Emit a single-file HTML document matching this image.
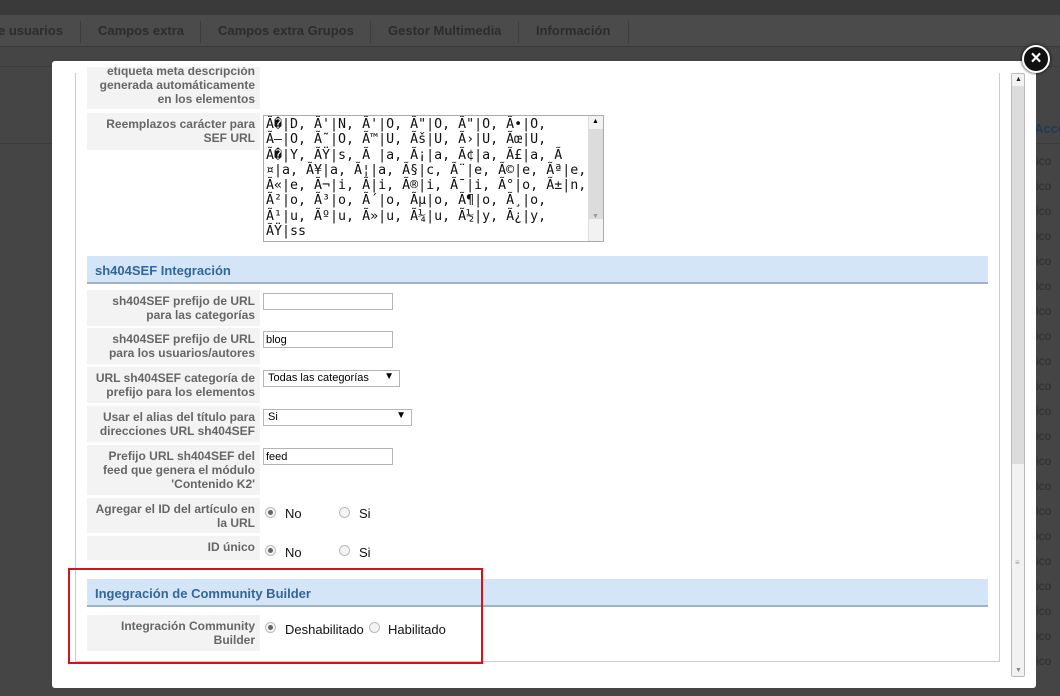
<!DOCTYPE html>
<html><head><meta charset="utf-8"><style>
*{margin:0;padding:0;box-sizing:border-box}
html,body{width:1060px;height:696px;overflow:hidden;background:#454545}
body{position:relative;font-family:"Liberation Sans",sans-serif}
.a{position:absolute}
.s{position:absolute;width:265px;height:24px;background:#454545}
.n{position:absolute;top:15px;width:265px;height:32px;background:#4b4b4b}
.top{left:0;top:0;width:1060px;height:15px;background:#3a3a3a}
.nv{left:0;top:15px;width:1060px;height:32px;border-bottom:1px solid #3a3a3a}
.nv span{position:absolute;top:8px;font-size:13px;font-weight:bold;color:#2c2c2c}
.nv i{position:absolute;top:6px;width:1px;height:22px;background:#3d3d3d}
.bgrow{left:0;width:1060px;height:1px;background:#3c3c3c}
.ico{left:1036px;font-size:12px;color:#2e2e2e}
.modal{left:52px;top:61px;width:984px;height:627px;background:#fff;border-radius:3px}
.inner{left:75px;top:73px;width:925px;height:589px;border-left:1px solid #ccc;border-right:1px solid #ccc;border-bottom:1px solid #ccc}
.lab{left:87px;width:173px;background:#f3f3f3;font-size:12px;font-weight:bold;color:#666;text-align:right;padding:4px 5px 0 0;line-height:14px}
.hdr{left:87px;width:901px;height:28px;background:#d4e5f7;border-bottom:2px solid #9fb3c8;font-size:13px;font-weight:bold;color:#336699;padding:7px 0 0 8px}
.inp{height:17px;border:1px solid #b5b5b5;background:#fff;font-size:11px;padding:2px 2px;color:#000}
.sel{height:17px;border:1px solid #b5b5b5;background:#fff;font-size:11px;padding:1px 4px;color:#000}
.sel b{position:absolute;right:5px;top:0;font-size:10px}
.rad{width:11px;height:11px;border-radius:50%;border:1px solid #bbb;background:#f4f4f4}
.rad.on::after{content:"";position:absolute;left:2px;top:2px;width:5px;height:5px;border-radius:50%;background:#666}
.rt{font-size:13px;color:#111}
.ta{left:263px;top:115px;width:341px;height:127px;border:1px solid #aaa;background:#fff;overflow:hidden}
.ta pre{position:absolute;left:2px;top:1px;font-family:"DejaVu Sans Mono","Liberation Mono",monospace;font-size:13.3px;line-height:15.3px;color:#111}
</style></head><body>
<div class="s" style="left:0;top:47px"></div><div class="s" style="left:265px;top:47px"></div><div class="s" style="left:530px;top:47px"></div><div class="s" style="left:795px;top:47px"></div>
<div class="s" style="left:0;top:71px"></div><div class="s" style="left:795px;top:71px"></div>
<div class="s" style="left:0;top:95px"></div><div class="s" style="left:795px;top:95px"></div>
<div class="s" style="left:0;top:119px"></div><div class="s" style="left:795px;top:119px"></div>
<div class="s" style="left:0;top:143px"></div><div class="s" style="left:795px;top:143px"></div>
<div class="s" style="left:0;top:167px"></div><div class="s" style="left:795px;top:167px"></div>
<div class="s" style="left:0;top:191px"></div><div class="s" style="left:795px;top:191px"></div>
<div class="s" style="left:0;top:215px"></div><div class="s" style="left:795px;top:215px"></div>
<div class="s" style="left:0;top:239px"></div><div class="s" style="left:795px;top:239px"></div>
<div class="s" style="left:0;top:263px"></div><div class="s" style="left:795px;top:263px"></div>
<div class="s" style="left:0;top:287px"></div><div class="s" style="left:795px;top:287px"></div>
<div class="s" style="left:0;top:311px"></div><div class="s" style="left:795px;top:311px"></div>
<div class="s" style="left:0;top:335px"></div><div class="s" style="left:795px;top:335px"></div>
<div class="s" style="left:0;top:359px"></div><div class="s" style="left:795px;top:359px"></div>
<div class="s" style="left:0;top:383px"></div><div class="s" style="left:795px;top:383px"></div>
<div class="s" style="left:0;top:407px"></div><div class="s" style="left:795px;top:407px"></div>
<div class="s" style="left:0;top:431px"></div><div class="s" style="left:795px;top:431px"></div>
<div class="s" style="left:0;top:455px"></div><div class="s" style="left:795px;top:455px"></div>
<div class="s" style="left:0;top:479px"></div><div class="s" style="left:795px;top:479px"></div>
<div class="s" style="left:0;top:503px"></div><div class="s" style="left:795px;top:503px"></div>
<div class="s" style="left:0;top:527px"></div><div class="s" style="left:795px;top:527px"></div>
<div class="s" style="left:0;top:551px"></div><div class="s" style="left:795px;top:551px"></div>
<div class="s" style="left:0;top:575px"></div><div class="s" style="left:795px;top:575px"></div>
<div class="s" style="left:0;top:599px"></div><div class="s" style="left:795px;top:599px"></div>
<div class="s" style="left:0;top:623px"></div><div class="s" style="left:795px;top:623px"></div>
<div class="s" style="left:0;top:647px"></div><div class="s" style="left:795px;top:647px"></div>
<div class="s" style="left:0;top:671px;height:25px"></div><div class="s" style="left:265px;top:671px;height:25px"></div><div class="s" style="left:530px;top:671px;height:25px"></div><div class="s" style="left:795px;top:671px;height:25px"></div>
<div class="n" style="left:0"></div><div class="n" style="left:265px"></div><div class="n" style="left:530px"></div><div class="n" style="left:795px"></div>
<div class="a top"></div>
<div class="a nv">
<span style="left:-2px">e usuarios</span><i style="left:80px"></i>
<span style="left:98px">Campos extra</span><i style="left:200px"></i>
<span style="left:218px">Campos extra Grupos</span><i style="left:370px"></i>
<span style="left:388px">Gestor Multimedia</span><i style="left:518px"></i>
<span style="left:536px">Información</span><i style="left:628px"></i>
</div>
<div class="a bgrow" style="top:66px"></div>
<div class="a bgrow" style="top:143px"></div>
<div class="a" style="left:1034px;top:121px;font-size:13px;font-weight:bold;color:#1f3a52">Acce</div>
<div class="a ico" style="top:154px">ico</div><div class="a ico" style="top:179px">ico</div><div class="a ico" style="top:204px">ico</div><div class="a ico" style="top:229px">ico</div><div class="a ico" style="top:254px">ico</div><div class="a ico" style="top:279px">ico</div><div class="a ico" style="top:304px">ico</div><div class="a ico" style="top:329px">ico</div><div class="a ico" style="top:354px">ico</div><div class="a ico" style="top:379px">ico</div><div class="a ico" style="top:404px">ico</div><div class="a ico" style="top:429px">ico</div><div class="a ico" style="top:454px">ico</div><div class="a ico" style="top:479px">ico</div><div class="a ico" style="top:504px">ico</div><div class="a ico" style="top:529px">ico</div><div class="a ico" style="top:554px">ico</div><div class="a ico" style="top:579px">ico</div><div class="a ico" style="top:604px">ico</div><div class="a ico" style="top:629px">ico</div><div class="a ico" style="top:654px">ico</div>

<div class="a modal"></div>
<div class="a inner"></div>
<div class="a" style="left:1011px;top:73px;width:14px;height:604px;border:1px solid #bbb;border-radius:2px;background:#f2f2f2">
<div class="a" style="left:0;top:12px;width:12px;height:378px;background:#dcdcdc"></div>
<div class="a" style="left:3px;top:2px;font-size:7px;color:#222">▲</div>
<div class="a" style="left:3px;bottom:2px;font-size:7px;color:#888">▼</div>
<div class="a" style="left:3px;top:484px;font-size:8px;color:#999">≡</div>
</div>
<div class="a" style="left:1022px;top:45px;width:28px;height:28px;border-radius:50%;background:#111;border:2px solid #fff;box-shadow:0 0 3px #000;color:#fff;font-size:19px;font-weight:bold;text-align:center;line-height:23px">×</div>

<div class="a" style="left:87px;top:67px;width:173px;height:42px;overflow:hidden">
<div class="a lab" style="left:0;top:-3px;height:45px;padding-top:0">etiqueta meta descripción generada automáticamente en los elementos</div>
</div>
<div class="a lab" style="top:113px;height:37px">Reemplazos carácter para SEF URL</div>
<div class="a ta"><pre>Ã�|D, Ã'|N, Ã'|O, Ã"|O, Ã"|O, Ã•|O,
Ã–|O, Ã˜|O, Ã™|U, Ãš|U, Ã›|U, Ãœ|U,
Ã�|Y, ÃŸ|s, Ã |a, Ã¡|a, Ã¢|a, Ã£|a, Ã
¤|a, Ã¥|a, Ã¦|a, Ã§|c, Ã¨|e, Ã©|e, Ãª|e,
Ã«|e, Ã¬|i, Ã|i, Ã®|i, Ã¯|i, Ã°|o, Ã±|n,
Ã²|o, Ã³|o, Ã´|o, Ãµ|o, Ã¶|o, Ã¸|o,
Ã¹|u, Ãº|u, Ã»|u, Ã¼|u, Ã½|y, Ã¿|y,
ÃŸ|ss</pre>
<div class="a" style="right:0;top:0;width:15px;height:125px;background:#f2f2f2;border-left:1px solid #ddd">
<div class="a" style="left:0;top:13px;width:14px;height:90px;background:#dcdcdc"></div>
<div class="a" style="left:3px;top:2px;font-size:7px">▲</div>
<div class="a" style="left:3px;top:97px;font-size:7px;color:#999">▼</div></div>
</div>

<div class="a hdr" style="top:256px">sh404SEF Integración</div>
<div class="a lab" style="top:290px;height:36px">sh404SEF prefijo de URL para las categorías</div>
<div class="a inp" style="left:263px;top:293px;width:130px"></div>
<div class="a lab" style="top:328px;height:36px">sh404SEF prefijo de URL para los usuarios/autores</div>
<div class="a inp" style="left:263px;top:331px;width:130px">blog</div>
<div class="a lab" style="top:367px;height:36px">URL sh404SEF categoría de prefijo para los elementos</div>
<div class="a sel" style="left:263px;top:370px;width:137px">Todas las categorías<b>▼</b></div>
<div class="a lab" style="top:406px;height:36px">Usar el alias del título para direcciones URL sh404SEF</div>
<div class="a sel" style="left:263px;top:409px;width:149px">Si<b>▼</b></div>
<div class="a lab" style="top:445px;height:50px">Prefijo URL sh404SEF del feed que genera el módulo 'Contenido K2'</div>
<div class="a inp" style="left:263px;top:448px;width:130px">feed</div>
<div class="a lab" style="top:498px;height:35px">Agregar el ID del artículo en la URL</div>
<div class="a rad on" style="left:265px;top:507px"></div><div class="a rt" style="left:285px;top:506px">No</div>
<div class="a rad" style="left:339px;top:507px"></div><div class="a rt" style="left:359px;top:506px">Si</div>
<div class="a lab" style="top:536px;height:24px">ID único</div>
<div class="a rad on" style="left:265px;top:545px"></div><div class="a rt" style="left:285px;top:545px">No</div>
<div class="a rad" style="left:339px;top:545px"></div><div class="a rt" style="left:359px;top:545px">Si</div>

<div class="a hdr" style="top:579px">Ingegración de Community Builder</div>
<div class="a lab" style="top:615px;height:36px">Integración Community Builder</div>
<div class="a rad on" style="left:265px;top:622px"></div><div class="a rt" style="left:285px;top:622px">Deshabilitado</div>
<div class="a rad" style="left:369px;top:622px"></div><div class="a rt" style="left:388px;top:622px">Habilitado</div>

<div class="a" style="left:68px;top:568px;width:415px;height:96px;border:2px solid #d0161b"></div>
</body></html>
